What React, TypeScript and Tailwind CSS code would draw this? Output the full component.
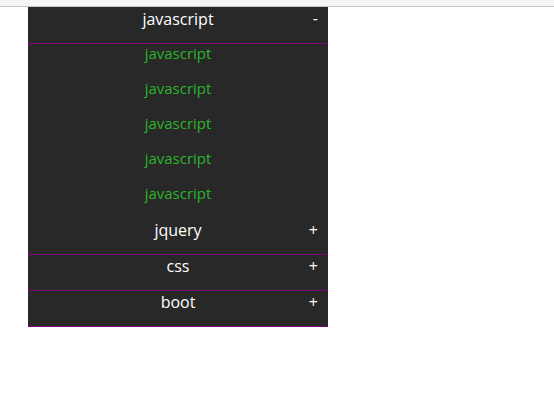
import React from "react";

const font = { fontFamily: '"Open Sans", "Noto Sans", sans-serif' };

function Header({ label, sign, first }: { label: string; sign: string; first?: boolean }) {
  return (
    <div
      className={`relative text-center text-white text-[16px] leading-[22px] border-b border-solid border-[#800080] ${
        first ? "h-[37px] pt-[1px]" : "h-[36px]"
      }`}
    >
      {label}
      <span className="absolute right-[10px] top-0 text-[16px] leading-[22px] text-white">{sign}</span>
    </div>
  );
}

export default function App() {
  return (
    <div className="w-[554px] h-[401px] bg-white" style={font}>
      <div className="h-[7px] bg-[#f5f5f5] border-b border-[#c4c4c4]" />
      <div className="ml-[28px] w-[300px] bg-[#282828]">
        <Header label="javascript" sign="-" first />
        {[0, 1, 2, 3, 4].map((i) => (
          <div key={i} className="h-[35px] text-center text-[15px] leading-[18px] text-[#2bb52b]">
            javascript
          </div>
        ))}
        <Header label="jquery" sign="+" />
        <Header label="css" sign="+" />
        <Header label="boot" sign="+" />
      </div>
    </div>
  );
}
